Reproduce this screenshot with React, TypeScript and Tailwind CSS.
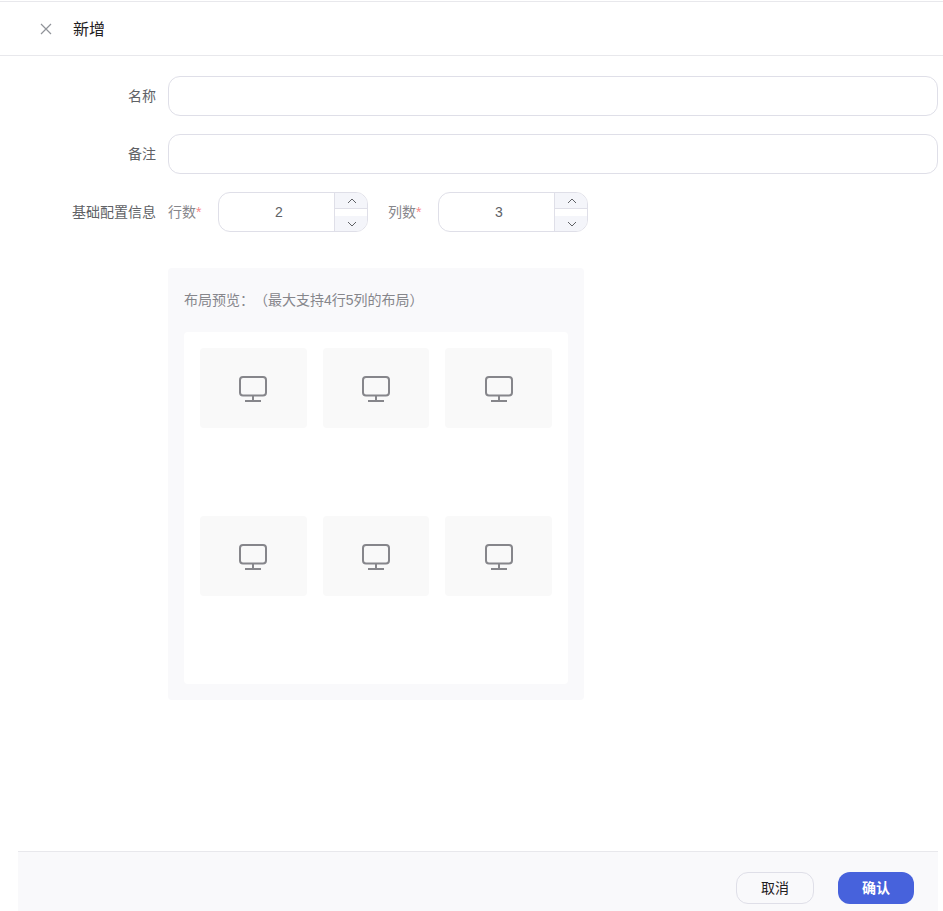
const FONT = "font-['Liberation_Sans','Noto_Sans_CJK_SC',sans-serif]";

function Monitor() {
  return (
    <svg width="28" height="28" viewBox="0 0 28 28" fill="none" stroke="#86868b" strokeWidth="2">
      <rect x="1" y="3" width="26" height="18.6" rx="3" />
      <path d="M14 22v5M6 27h16" />
    </svg>
  );
}

function Field({ label, children }: { label: string; children: React.ReactNode }) {
  return (
    <div className="flex items-center">
      <label className="w-[156px] shrink-0 text-right text-[14px] text-[#606266]">{label}</label>
      <div className="ml-3 min-w-0 flex-1">{children}</div>
    </div>
  );
}

function Stepper({ label, value }: { label: string; value: number }) {
  return (
    <div className="flex items-center">
      <span className="w-[50px] shrink-0 text-[14px] text-[#86868b]">
        {label}
        <span className="text-[#f78989]">*</span>
      </span>
      <div className="flex h-10 w-[150px] overflow-hidden rounded-[12px] border border-[#dfdfe8]">
        <div className="flex flex-1 items-center justify-center pl-[5px] text-[14px] text-[#606266]">{value}</div>
        <div className="flex w-[33px] flex-col justify-between border-l border-[#dfdfe8]">
          <button className="flex h-4 items-center justify-center border-b border-[#dfdfe8] bg-[#f4f5fa] pl-px">
            <svg width="10" height="6" viewBox="0 0 10 6" fill="none" stroke="#606266" strokeWidth="1">
              <path d="M1 5l4-4 4 4" />
            </svg>
          </button>
          <button className="flex h-[15px] items-center justify-center bg-[#f4f5fa] pl-px">
            <svg width="10" height="6" viewBox="0 0 10 6" fill="none" stroke="#606266" strokeWidth="1">
              <path d="M1 1l4 4 4-4" />
            </svg>
          </button>
        </div>
      </div>
    </div>
  );
}

export default function App() {
  return (
    <div className={`flex h-[911px] w-[943px] flex-col overflow-hidden bg-white ${FONT}`}>
      <div className="mt-px flex h-[55px] shrink-0 items-center border-y border-[#e8e8ec] pl-[40px]">
        <svg width="12" height="12" viewBox="0 0 12 12" fill="none" stroke="#909399" strokeWidth="1.2">
          <path d="M1 1l10 10M11 1L1 11" />
        </svg>
        <span className="ml-[21px] pt-0.5 text-[16px] text-[#1f2022]">新增</span>
      </div>

      <div className="flex flex-1 flex-col gap-[18px] pt-5 pr-[5px]">
        <Field label="名称">
          <input className="block h-10 w-full rounded-[12px] border border-[#dfdfe8]" />
        </Field>
        <Field label="备注">
          <input className="block h-10 w-full rounded-[12px] border border-[#dfdfe8]" />
        </Field>
        <Field label="基础配置信息">
          <div className="flex gap-5">
            <Stepper label="行数" value={2} />
            <Stepper label="列数" value={3} />
          </div>
        </Field>

        <div className="mt-[18px] ml-[168px] w-[416px] rounded bg-[#f9f9fb] p-4">
          <div className="h-[48px] pt-[6px] text-[14px] leading-[20px] text-[#86868b] [text-spacing-trim:space-all]">
            布局预览：（最大支持4行5列的布局）
          </div>
          <div className="grid grid-cols-3 grid-rows-[152px_152px] gap-4 rounded bg-white p-4">
            {[0, 1, 2, 3, 4, 5].map((i) => (
              <div key={i} className="flex h-20 items-center justify-center rounded bg-[#f9f9f9]">
                <Monitor />
              </div>
            ))}
          </div>
        </div>
      </div>

      <div className="ml-[18px] mr-[5px] flex h-[60px] shrink-0 items-start justify-end gap-6 border-t border-[#e8e8ec] bg-[#f9f9fb] pt-5 pr-6">
        <button className="h-8 w-[78px] rounded-[12px] border border-[#dfdfe8] text-[14px] text-[#1f2022]">取消</button>
        <button className="h-8 w-[76px] rounded-[12px] bg-[#4762dc] text-[14px] font-bold text-white">确认</button>
      </div>
    </div>
  );
}
